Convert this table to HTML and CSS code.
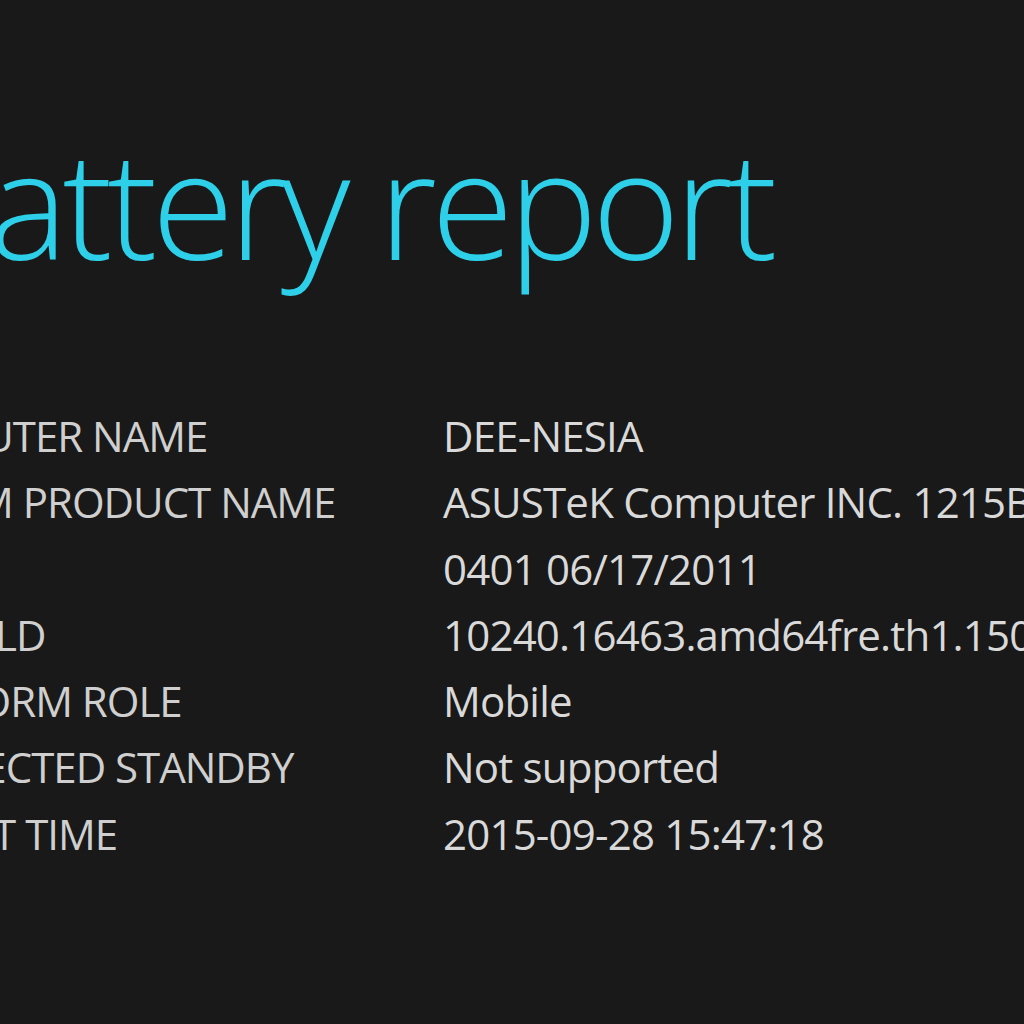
FILE: index.html
```html
<!DOCTYPE html>
<html lang="en">
<head>
<meta charset="utf-8">
<title>Battery report</title>
<link rel="stylesheet" href="styles.css">
</head>
<body>
<main class="report">
  <h1 class="title">Battery report</h1>
  <dl class="info">
    <dt>Computer name</dt><dd>DEE-NESIA</dd>
    <dt>System product name</dt><dd>ASUSTeK Computer INC. 1215B</dd>
    <dt>BIOS</dt><dd>0401 06/17/2011</dd>
    <dt>OS build</dt><dd>10240.16463.amd64fre.th1.150819-1946</dd>
    <dt>Platform role</dt><dd>Mobile</dd>
    <dt>Connected standby</dt><dd>Not supported</dd>
    <dt>Report time</dt><dd>2015-09-28 15:47:18</dd>
  </dl>
</main>
</body>
</html>
```
FILE: styles.css
```css
html, body {
  margin: 0;
  padding: 0;
  background: #191919;
  overflow: hidden;
  width: 1024px;
  height: 1024px;
}
.report {
  font-family: "Open Sans", "Noto Sans", sans-serif;
  white-space: nowrap;
}
.title {
  margin: 0;
  padding-top: 125px;
  margin-left: -100px;
  font-size: 150px;
  line-height: 155px;
  font-weight: 360;
  color: #2dd0e8;
  letter-spacing: -5.5px;
}
.info {
  margin: 123px 0 0 -135px;
  display: grid;
  grid-template-columns: 578px auto;
  font-size: 42px;
  line-height: 66.3px;
}
.info dt {
  text-transform: uppercase;
  color: #cfcfcf;
  letter-spacing: -1px;
  margin: 0;
}
.info dd {
  margin: 0;
  color: #d9d9d9;
  letter-spacing: -0.8px;
}
```
